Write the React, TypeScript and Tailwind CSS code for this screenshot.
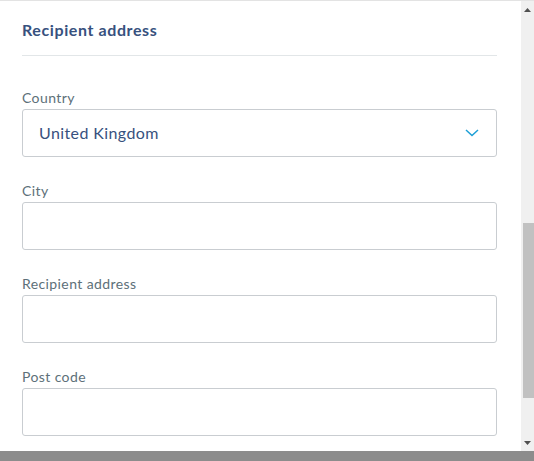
import React from 'react';

const fields = ['City', 'Recipient address', 'Post code'];

const Field: React.FC<{ label: string; children?: React.ReactNode }> = ({ label, children }) => (
  <div className="mt-[24px] first:mt-0">
    <label className="block h-[20px] text-[14px] leading-[20px] tracking-[0.4px] text-[#5d7079]">{label}</label>
    <div className="mt-[1px] flex h-[48px] items-center rounded-[3px] border border-[#c9cdd1] bg-white px-[16px]">
      {children}
    </div>
  </div>
);

const App: React.FC = () => {
  return (
    <div className="flex h-[461px] w-[534px] flex-col overflow-hidden bg-[#8c8c8c]" style={{ fontFamily: 'Lato, "Open Sans", sans-serif' }}>
      <div className="flex h-[451px] border-t border-[#e3e3e3] bg-white">
        {/* form body */}
        <div className="w-[521px] px-[22px] pt-[17px]">
          <h3 className="h-[24px] text-[16px] font-bold leading-[24px] tracking-[0.6px] text-[#37517e]">Recipient address</h3>
          <div className="mt-[13px] h-px w-[475px] bg-[#e2e6e8]" />

          <div className="mt-[32px] w-[475px]">
            <Field label="Country">
              <span className="flex-1 text-[16px] tracking-[0.4px] text-[#37517e]">United Kingdom</span>
              <svg width="14" height="8" viewBox="0 0 14 8" fill="none" className="mr-[1px]">
                <path d="M1 1l6 5.5L13 1" stroke="#1c9fd6" strokeWidth="1.5" />
              </svg>
            </Field>
            {fields.map((f) => (
              <Field key={f} label={f} />
            ))}
          </div>
        </div>

        {/* scrollbar */}
        <div className="flex w-[13px] flex-col bg-[#f0f0f0]">
          <div className="flex h-[17px] items-center justify-center">
            <svg width="7" height="4" viewBox="0 0 7 4"><path d="M0 4L3.5 0L7 4z" fill="#505050" /></svg>
          </div>
          <div className="mt-[205px] ml-[2px] h-[175px] bg-[#c1c1c1]" />
          <div className="mt-auto flex h-[17px] items-center justify-center">
            <svg width="7" height="4" viewBox="0 0 7 4"><path d="M0 0L3.5 4L7 0z" fill="#505050" /></svg>
          </div>
        </div>
      </div>
    </div>
  );
};

export default App;
